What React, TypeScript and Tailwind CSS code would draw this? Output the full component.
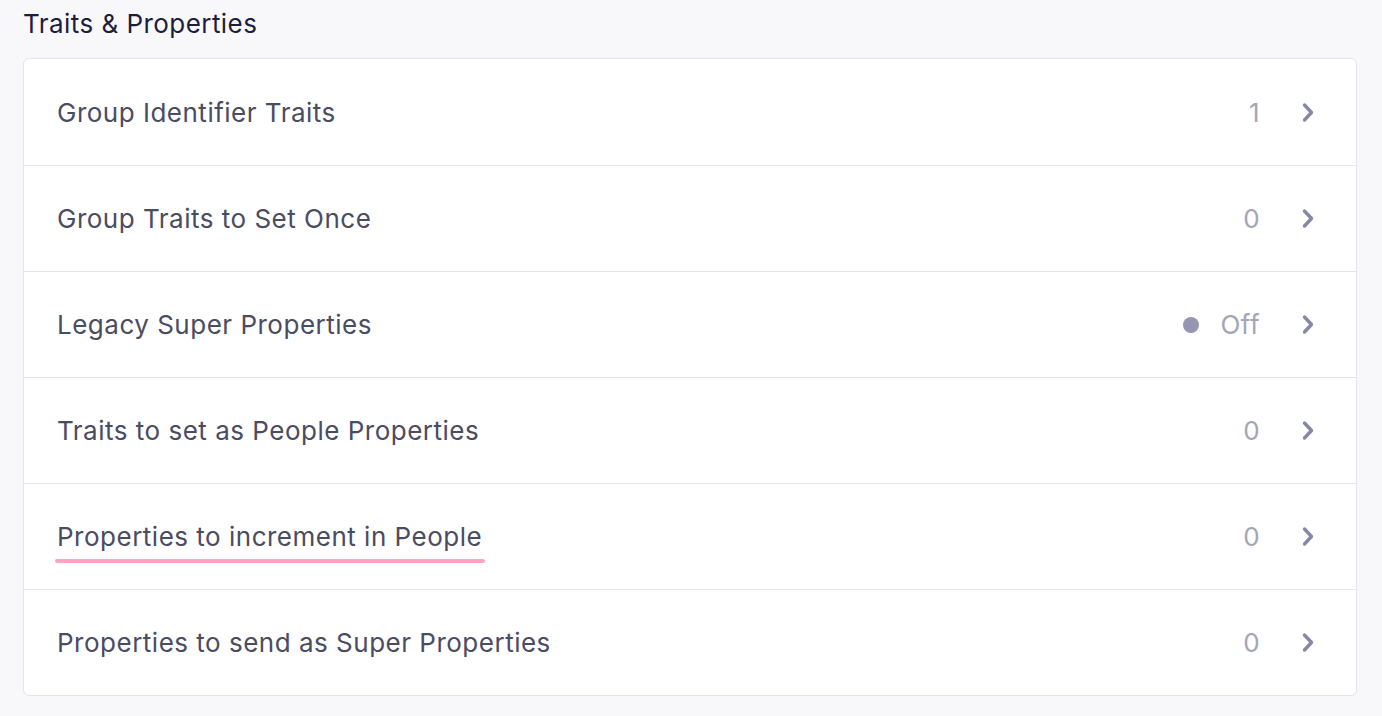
type Row = {
  label: string;
  value: string;
  dot?: boolean;
  highlight?: boolean;
};

const rows: Row[] = [
  { label: "Group Identifier Traits", value: "1" },
  { label: "Group Traits to Set Once", value: "0" },
  { label: "Legacy Super Properties", value: "Off", dot: true },
  { label: "Traits to set as People Properties", value: "0" },
  { label: "Properties to increment in People", value: "0", highlight: true },
  { label: "Properties to send as Super Properties", value: "0" },
];

function Chevron() {
  return (
    <svg width="14" height="21" viewBox="0 0 14 21" fill="none" className="ml-[41px]">
      <polyline
        points="3.5,3 10.5,10.5 3.5,18"
        stroke="#8788a6"
        strokeWidth="3.4"
        strokeLinecap="round"
        strokeLinejoin="round"
      />
    </svg>
  );
}

export default function App() {
  return (
    <div
      className="min-h-screen bg-[#f8f8fb] pl-[23px] pr-[25px] pt-[7px]"
      style={{ fontFamily: "Inter, 'Noto Sans', sans-serif" }}
    >
      {/* Titre */}
      <h2 className="text-[26px] leading-[34px] text-[#1d1e3e] tracking-[0.45px]">Traits &amp; Properties</h2>

      {/* Carte */}
      <div className="mt-[17px] bg-white border border-[#e4e4ea] rounded-[6px]">
        {rows.map((row, i) => (
          <div
            key={row.label}
            className={`h-[106px] flex items-center pl-[33px] pr-[41px] ${i > 0 ? "border-t border-[#e4e4ea]" : ""}`}
          >
            <div className="relative">
              <span className="text-[26px] text-[#4a4c62] tracking-[0.5px]">{row.label}</span>
              {row.highlight && (
                <div className="absolute left-[-2px] right-[-3px] top-[42px] h-[4px] rounded-full bg-[#ffa2c3]" />
              )}
            </div>
            <div className="ml-auto flex items-center">
              {row.dot && <span className="w-[16px] h-[16px] rounded-full bg-[#9596b2] mr-[22px]" />}
              <span className="text-[26px] text-[#a4a5b5] tracking-[0.45px]">{row.value}</span>
              <Chevron />
            </div>
          </div>
        ))}
      </div>
    </div>
  );
}
